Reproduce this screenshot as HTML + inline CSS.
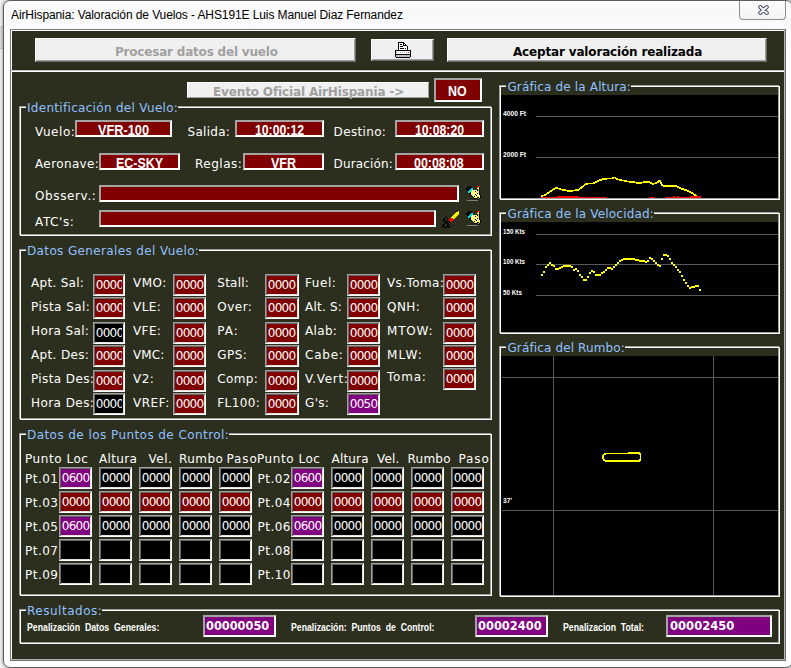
<!DOCTYPE html>
<html lang="es">
<head>
<meta charset="utf-8">
<title>AirHispania: Valoración de Vuelos</title>
<style>
html,body{margin:0;padding:0;}
body{width:791px;height:668px;overflow:hidden;background:#f3f3f3;position:relative;font-family:"Liberation Sans",sans-serif;}
#win{position:absolute;left:3px;top:0;width:788px;height:666px;border:1px solid #5c5c5c;border-radius:7px;background:linear-gradient(180deg,#ffffff 0,#f8f8f8 12px,#fbfbfb 28px,#ffffff 60px);box-shadow:inset 0 0 0 1px #fff,0 0 3px 1px rgba(0,0,0,.28);}
#cl{position:absolute;left:10px;top:29px;width:774px;height:630px;border:1px solid;border-color:#7b7b7b #707070 #707070 #7b7b7b;}
#app div,#app span.t{position:absolute;}
.t{white-space:pre;line-height:normal;transform-origin:0 50%;}
.clip{overflow:hidden;}
.btn{background:#f0f0f0;box-sizing:border-box;border:1px solid;border-color:#fff #696969 #696969 #fff;box-shadow:inset -1px -1px 0 #a0a0a0;}
.btn2{background:#f0f0f0;box-sizing:border-box;border:1px solid;border-color:#fff #a0a0a0 #a0a0a0 #fff;}
.f1{box-sizing:border-box;border:2px solid;border-color:#a4a4a4 #fff #fff #a4a4a4;}
.f2{box-sizing:border-box;border:1px solid;border-color:#a0a0a0 #fff #fff #a0a0a0;box-shadow:inset 1px 1px 0 #696969,inset -1px -1px 0 #e3e3e3;}
.gb{border:1px solid #a0a0a0;}
.gw{border:1px solid #fff;}
#close{position:absolute;left:739px;top:1px;width:45px;height:18px;border:1px solid #8e8e8e;border-top:none;border-radius:0 0 4px 4px;background:linear-gradient(180deg,#fdfdfd,#f3f3f3);}
svg{position:absolute;left:0;top:0;}
</style>
</head>
<body>
<div style="position:absolute;left:0;top:26px;width:4px;height:21px;background:#dcdcdc;border-top:1px solid #cfcfcf;border-bottom:1px solid #cfcfcf"></div>
<div id="win"></div>
<div id="close"></div>
<div id="cl"></div>
<div id="app">
<div style="left:11px;top:30px;width:773px;height:629px;background:#2d2f1e"></div>
<div style="left:11px;top:30px;width:774px;height:1px;background:#fff"></div>
<div style="left:11px;top:30px;width:1px;height:41px;background:#fff"></div>
<div style="left:11px;top:70px;width:774px;height:1px;background:#c4c4c4"></div>
<div style="left:11px;top:71px;width:774px;height:1px;background:#fff"></div>
<div style="left:11px;top:71px;width:1px;height:588px;background:#fff"></div>
<div style="left:784px;top:30px;width:1px;height:630px;background:#b4b4b4"></div>
<div style="left:11px;top:659px;width:774px;height:1px;background:#b4b4b4"></div>
<div class="btn" style="left:35px;top:38px;width:321px;height:24px"></div>
<div class="btn" style="left:371px;top:39px;width:63px;height:22px"></div>
<div class="btn" style="left:447px;top:38px;width:320px;height:24px"></div>
<div class="btn2" style="left:187px;top:82px;width:242px;height:16px"></div>
<div class="f1" style="left:434px;top:78px;width:48px;height:24px;background:#800000"></div>
<div class="gb" style="left:19px;top:106px;width:470px;height:127px"></div>
<div class="gw" style="left:20px;top:107px;width:470px;height:127px"></div>
<div style="left:26px;top:105px;width:152px;height:4px;background:#2d2f1e"></div>
<div class="gb" style="left:19px;top:249px;width:470px;height:168px"></div>
<div class="gw" style="left:20px;top:250px;width:470px;height:168px"></div>
<div style="left:26px;top:248px;width:173px;height:4px;background:#2d2f1e"></div>
<div class="gb" style="left:19px;top:433px;width:470px;height:160px"></div>
<div class="gw" style="left:20px;top:434px;width:470px;height:160px"></div>
<div style="left:26px;top:432px;width:203px;height:4px;background:#2d2f1e"></div>
<div class="gb" style="left:19px;top:609px;width:758px;height:32px"></div>
<div class="gw" style="left:20px;top:610px;width:758px;height:32px"></div>
<div style="left:26px;top:608px;width:76px;height:4px;background:#2d2f1e"></div>
<div class="gb" style="left:499px;top:85px;width:278px;height:112px"></div>
<div class="gw" style="left:500px;top:86px;width:278px;height:112px"></div>
<div style="left:506.4px;top:84px;width:124.60000000000002px;height:4px;background:#2d2f1e"></div>
<div class="gb" style="left:499px;top:212px;width:278px;height:119px"></div>
<div class="gw" style="left:500px;top:213px;width:278px;height:119px"></div>
<div style="left:506.4px;top:211px;width:147.60000000000002px;height:4px;background:#2d2f1e"></div>
<div class="gb" style="left:499px;top:346px;width:278px;height:248px"></div>
<div class="gw" style="left:500px;top:347px;width:278px;height:248px"></div>
<div style="left:506.4px;top:345px;width:118.60000000000002px;height:4px;background:#2d2f1e"></div>
<div class="f1" style="left:75px;top:120px;width:97px;height:17px;background:#800000"></div>
<div class="f1" style="left:235px;top:120px;width:89px;height:17px;background:#800000"></div>
<div class="f1" style="left:395px;top:120px;width:89px;height:17px;background:#800000"></div>
<div class="f1" style="left:99px;top:153px;width:81px;height:17px;background:#800000"></div>
<div class="f1" style="left:243px;top:153px;width:81px;height:17px;background:#800000"></div>
<div class="f1" style="left:395px;top:153px;width:89px;height:17px;background:#800000"></div>
<div class="f1" style="left:99px;top:185px;width:360px;height:17px;background:#800000"></div>
<div class="f1" style="left:99px;top:210px;width:337px;height:17px;background:#800000"></div>
<div class="f2" style="left:93px;top:274px;width:32px;height:22px;background:#800000"></div>
<div class="f2" style="left:93px;top:297px;width:32px;height:22px;background:#800000"></div>
<div class="f2" style="left:93px;top:322px;width:32px;height:22px;background:#000"></div>
<div class="f2" style="left:93px;top:345px;width:32px;height:22px;background:#800000"></div>
<div class="f2" style="left:93px;top:370px;width:32px;height:22px;background:#800000"></div>
<div class="f2" style="left:93px;top:393px;width:32px;height:22px;background:#000"></div>
<div class="f2" style="left:173px;top:274px;width:33px;height:22px;background:#800000"></div>
<div class="f2" style="left:173px;top:297px;width:33px;height:22px;background:#800000"></div>
<div class="f2" style="left:173px;top:322px;width:33px;height:22px;background:#800000"></div>
<div class="f2" style="left:173px;top:345px;width:33px;height:22px;background:#800000"></div>
<div class="f2" style="left:173px;top:370px;width:33px;height:22px;background:#800000"></div>
<div class="f2" style="left:173px;top:393px;width:33px;height:22px;background:#800000"></div>
<div class="f2" style="left:265px;top:274px;width:34px;height:22px;background:#800000"></div>
<div class="f2" style="left:265px;top:297px;width:34px;height:22px;background:#800000"></div>
<div class="f2" style="left:265px;top:322px;width:34px;height:22px;background:#800000"></div>
<div class="f2" style="left:265px;top:345px;width:34px;height:22px;background:#800000"></div>
<div class="f2" style="left:265px;top:370px;width:34px;height:22px;background:#800000"></div>
<div class="f2" style="left:265px;top:393px;width:34px;height:22px;background:#800000"></div>
<div class="f2" style="left:347px;top:274px;width:33px;height:22px;background:#800000"></div>
<div class="f2" style="left:347px;top:297px;width:33px;height:22px;background:#800000"></div>
<div class="f2" style="left:347px;top:322px;width:33px;height:22px;background:#800000"></div>
<div class="f2" style="left:347px;top:345px;width:33px;height:22px;background:#800000"></div>
<div class="f2" style="left:347px;top:370px;width:33px;height:22px;background:#800000"></div>
<div class="f2" style="left:347px;top:393px;width:33px;height:22px;background:#800080"></div>
<div class="f2" style="left:443px;top:274px;width:33px;height:22px;background:#800000"></div>
<div class="f2" style="left:443px;top:297px;width:33px;height:22px;background:#800000"></div>
<div class="f2" style="left:443px;top:322px;width:33px;height:22px;background:#800000"></div>
<div class="f2" style="left:443px;top:345px;width:33px;height:22px;background:#800000"></div>
<div class="f2" style="left:443px;top:368px;width:33px;height:22px;background:#800000"></div>
<div class="f2" style="left:59px;top:467px;width:33px;height:22px;background:#800080"></div>
<div class="f2" style="left:99px;top:467px;width:33px;height:22px;background:#000"></div>
<div class="f2" style="left:139px;top:467px;width:33px;height:22px;background:#000"></div>
<div class="f2" style="left:179px;top:467px;width:33px;height:22px;background:#000"></div>
<div class="f2" style="left:219px;top:467px;width:33px;height:22px;background:#000"></div>
<div class="f2" style="left:291px;top:467px;width:33px;height:22px;background:#800080"></div>
<div class="f2" style="left:331px;top:467px;width:33px;height:22px;background:#000"></div>
<div class="f2" style="left:371px;top:467px;width:33px;height:22px;background:#000"></div>
<div class="f2" style="left:411px;top:467px;width:33px;height:22px;background:#000"></div>
<div class="f2" style="left:451px;top:467px;width:33px;height:22px;background:#000"></div>
<div class="f2" style="left:59px;top:491px;width:33px;height:22px;background:#800000"></div>
<div class="f2" style="left:99px;top:491px;width:33px;height:22px;background:#800000"></div>
<div class="f2" style="left:139px;top:491px;width:33px;height:22px;background:#800000"></div>
<div class="f2" style="left:179px;top:491px;width:33px;height:22px;background:#800000"></div>
<div class="f2" style="left:219px;top:491px;width:33px;height:22px;background:#800000"></div>
<div class="f2" style="left:291px;top:491px;width:33px;height:22px;background:#800000"></div>
<div class="f2" style="left:331px;top:491px;width:33px;height:22px;background:#800000"></div>
<div class="f2" style="left:371px;top:491px;width:33px;height:22px;background:#800000"></div>
<div class="f2" style="left:411px;top:491px;width:33px;height:22px;background:#800000"></div>
<div class="f2" style="left:451px;top:491px;width:33px;height:22px;background:#800000"></div>
<div class="f2" style="left:59px;top:515px;width:33px;height:22px;background:#800080"></div>
<div class="f2" style="left:99px;top:515px;width:33px;height:22px;background:#000"></div>
<div class="f2" style="left:139px;top:515px;width:33px;height:22px;background:#000"></div>
<div class="f2" style="left:179px;top:515px;width:33px;height:22px;background:#000"></div>
<div class="f2" style="left:219px;top:515px;width:33px;height:22px;background:#000"></div>
<div class="f2" style="left:291px;top:515px;width:33px;height:22px;background:#800080"></div>
<div class="f2" style="left:331px;top:515px;width:33px;height:22px;background:#000"></div>
<div class="f2" style="left:371px;top:515px;width:33px;height:22px;background:#000"></div>
<div class="f2" style="left:411px;top:515px;width:33px;height:22px;background:#000"></div>
<div class="f2" style="left:451px;top:515px;width:33px;height:22px;background:#000"></div>
<div class="f2" style="left:59px;top:539px;width:33px;height:22px;background:#000"></div>
<div class="f2" style="left:99px;top:539px;width:33px;height:22px;background:#000"></div>
<div class="f2" style="left:139px;top:539px;width:33px;height:22px;background:#000"></div>
<div class="f2" style="left:179px;top:539px;width:33px;height:22px;background:#000"></div>
<div class="f2" style="left:219px;top:539px;width:33px;height:22px;background:#000"></div>
<div class="f2" style="left:291px;top:539px;width:33px;height:22px;background:#000"></div>
<div class="f2" style="left:331px;top:539px;width:33px;height:22px;background:#000"></div>
<div class="f2" style="left:371px;top:539px;width:33px;height:22px;background:#000"></div>
<div class="f2" style="left:411px;top:539px;width:33px;height:22px;background:#000"></div>
<div class="f2" style="left:451px;top:539px;width:33px;height:22px;background:#000"></div>
<div class="f2" style="left:59px;top:563px;width:33px;height:22px;background:#000"></div>
<div class="f2" style="left:99px;top:563px;width:33px;height:22px;background:#000"></div>
<div class="f2" style="left:139px;top:563px;width:33px;height:22px;background:#000"></div>
<div class="f2" style="left:179px;top:563px;width:33px;height:22px;background:#000"></div>
<div class="f2" style="left:219px;top:563px;width:33px;height:22px;background:#000"></div>
<div class="f2" style="left:291px;top:563px;width:33px;height:22px;background:#000"></div>
<div class="f2" style="left:331px;top:563px;width:33px;height:22px;background:#000"></div>
<div class="f2" style="left:371px;top:563px;width:33px;height:22px;background:#000"></div>
<div class="f2" style="left:411px;top:563px;width:33px;height:22px;background:#000"></div>
<div class="f2" style="left:451px;top:563px;width:33px;height:22px;background:#000"></div>
<div class="f1" style="left:203px;top:615px;width:73px;height:22px;background:#800080"></div>
<div class="f1" style="left:475px;top:615px;width:73px;height:22px;background:#800080"></div>
<div class="f1" style="left:666px;top:615px;width:106px;height:22px;background:#800080"></div>
<div style="left:501px;top:95px;width:277px;height:103px;background:#000"></div>
<div style="left:501px;top:222px;width:277px;height:110px;background:#000"></div>
<div style="left:501px;top:356px;width:277px;height:239px;background:#000"></div>
<div style="left:536px;top:116px;width:242px;height:1px;background:#5a5a5a"></div>
<div style="left:536px;top:157px;width:242px;height:1px;background:#5a5a5a"></div>
<div style="left:536px;top:234px;width:242px;height:1px;background:#5a5a5a"></div>
<div style="left:536px;top:264px;width:242px;height:1px;background:#5a5a5a"></div>
<div style="left:536px;top:295px;width:242px;height:1px;background:#5a5a5a"></div>
<div style="left:553px;top:356px;width:1px;height:239px;background:#5a5a5a"></div>
<div style="left:713px;top:356px;width:1px;height:239px;background:#5a5a5a"></div>
<div style="left:502px;top:377px;width:276px;height:1px;background:#5a5a5a"></div>
<div style="left:502px;top:510px;width:276px;height:1px;background:#5a5a5a"></div>
<span class="t" style="left:11.00px;top:8.00px;font:12px 'Liberation Sans', sans-serif;color:#000;letter-spacing:-0.101px;">AirHispania: Valoración de Vuelos - AHS191E Luis Manuel Diaz Fernandez</span>
<span class="t" style="left:115.00px;top:45.00px;font:bold 12px 'DejaVu Sans', sans-serif;color:#a0a0a0;letter-spacing:-0.197px;">Procesar datos del vuelo</span>
<span class="t" style="left:513.00px;top:45.00px;font:bold 12px 'DejaVu Sans', sans-serif;color:#000;letter-spacing:-0.163px;">Aceptar valoración realizada</span>
<span class="t" style="left:213.00px;top:85.00px;font:bold 12px 'DejaVu Sans', sans-serif;color:#a0a0a0;letter-spacing:-0.141px;">Evento Oficial AirHispania -&gt;</span>
<span class="t" style="left:448.40px;top:82.00px;font:bold 15px 'Liberation Sans', sans-serif;color:#fff;transform:scaleX(0.8267);">NO</span>
<span class="t" style="left:27.00px;top:101.00px;font:12px 'DejaVu Sans', sans-serif;color:#90c0ff;letter-spacing:0.302px;">Identificación del Vuelo:</span>
<span class="t" style="left:27.00px;top:244.00px;font:12px 'DejaVu Sans', sans-serif;color:#90c0ff;letter-spacing:0.368px;">Datos Generales del Vuelo:</span>
<span class="t" style="left:27.00px;top:428.00px;font:12px 'DejaVu Sans', sans-serif;color:#90c0ff;letter-spacing:0.435px;">Datos de los Puntos de Control:</span>
<span class="t" style="left:27.00px;top:604.00px;font:12px 'DejaVu Sans', sans-serif;color:#90c0ff;letter-spacing:0.521px;">Resultados:</span>
<span class="t" style="left:507.40px;top:80.00px;font:12px 'DejaVu Sans', sans-serif;color:#90c0ff;letter-spacing:0.154px;">Gráfica de la Altura:</span>
<span class="t" style="left:507.40px;top:207.00px;font:12px 'DejaVu Sans', sans-serif;color:#90c0ff;letter-spacing:0.190px;">Gráfica de la Velocidad:</span>
<span class="t" style="left:507.40px;top:341.00px;font:12px 'DejaVu Sans', sans-serif;color:#90c0ff;letter-spacing:0.138px;">Gráfica del Rumbo:</span>
<span class="t" style="left:35.00px;top:125.00px;font:12px 'DejaVu Sans', sans-serif;color:#fff;letter-spacing:0.558px;">Vuelo:</span>
<span class="t" style="left:98.00px;top:121.00px;font:bold 15px 'Liberation Sans', sans-serif;color:#fff;transform:scaleX(0.8496);">VFR-100</span>
<span class="t" style="left:187.60px;top:125.00px;font:12px 'DejaVu Sans', sans-serif;color:#fff;letter-spacing:0.274px;">Salida:</span>
<span class="t" style="left:255.00px;top:121.00px;font:bold 15px 'Liberation Sans', sans-serif;color:#fff;transform:scaleX(0.8160);">10:00:12</span>
<span class="t" style="left:333.60px;top:125.00px;font:12px 'DejaVu Sans', sans-serif;color:#fff;letter-spacing:0.342px;">Destino:</span>
<span class="t" style="left:415.00px;top:121.00px;font:bold 15px 'Liberation Sans', sans-serif;color:#fff;transform:scaleX(0.8160);">10:08:20</span>
<span class="t" style="left:35.00px;top:157.00px;font:12px 'DejaVu Sans', sans-serif;color:#fff;letter-spacing:0.376px;">Aeronave:</span>
<span class="t" style="left:116.00px;top:154.00px;font:bold 15px 'Liberation Sans', sans-serif;color:#fff;transform:scaleX(0.8291);">EC-SKY</span>
<span class="t" style="left:195.00px;top:157.00px;font:12px 'DejaVu Sans', sans-serif;color:#fff;letter-spacing:0.520px;">Reglas:</span>
<span class="t" style="left:271.00px;top:154.00px;font:bold 15px 'Liberation Sans', sans-serif;color:#fff;transform:scaleX(0.8333);">VFR</span>
<span class="t" style="left:333.60px;top:157.00px;font:12px 'DejaVu Sans', sans-serif;color:#fff;letter-spacing:0.155px;">Duración:</span>
<span class="t" style="left:414.40px;top:154.00px;font:bold 15px 'Liberation Sans', sans-serif;color:#fff;transform:scaleX(0.8260);">00:08:08</span>
<span class="t" style="left:35.00px;top:189.00px;font:12px 'DejaVu Sans', sans-serif;color:#fff;letter-spacing:0.622px;">Obsserv.:</span>
<span class="t" style="left:35.00px;top:215.00px;font:12px 'DejaVu Sans', sans-serif;color:#fff;letter-spacing:0.602px;">ATC&#x27;s:</span>
<span class="t" style="left:31.00px;top:276.00px;font:12px 'DejaVu Sans', sans-serif;color:#fff;letter-spacing:0.298px;">Apt. Sal:</span>
<div class="clip" style="left:95.0px;top:278.00px;width:27.0px;height:14px"><span class="t" style="left:0.80px;top:0;font:12px 'DejaVu Sans', sans-serif;color:#fff;letter-spacing:-0.75px">0000</span></div>
<span class="t" style="left:31.00px;top:300.00px;font:12px 'DejaVu Sans', sans-serif;color:#fff;letter-spacing:0.458px;">Pista Sal:</span>
<div class="clip" style="left:95.0px;top:301.00px;width:27.0px;height:14px"><span class="t" style="left:0.80px;top:0;font:12px 'DejaVu Sans', sans-serif;color:#fff;letter-spacing:-0.75px">0000</span></div>
<span class="t" style="left:31.00px;top:324.00px;font:12px 'DejaVu Sans', sans-serif;color:#fff;letter-spacing:0.384px;">Hora Sal:</span>
<div class="clip" style="left:95.0px;top:326.00px;width:27.0px;height:14px"><span class="t" style="left:0.80px;top:0;font:12px 'DejaVu Sans', sans-serif;color:#fff;letter-spacing:-0.75px">0000</span></div>
<span class="t" style="left:31.00px;top:348.00px;font:12px 'DejaVu Sans', sans-serif;color:#fff;letter-spacing:0.353px;">Apt. Des:</span>
<div class="clip" style="left:95.0px;top:349.00px;width:27.0px;height:14px"><span class="t" style="left:0.80px;top:0;font:12px 'DejaVu Sans', sans-serif;color:#fff;letter-spacing:-0.75px">0000</span></div>
<span class="t" style="left:31.00px;top:372.00px;font:12px 'DejaVu Sans', sans-serif;color:#fff;letter-spacing:0.393px;">Pista Des:</span>
<div class="clip" style="left:95.0px;top:374.00px;width:27.0px;height:14px"><span class="t" style="left:0.80px;top:0;font:12px 'DejaVu Sans', sans-serif;color:#fff;letter-spacing:-0.75px">0000</span></div>
<span class="t" style="left:31.00px;top:396.00px;font:12px 'DejaVu Sans', sans-serif;color:#fff;letter-spacing:0.439px;">Hora Des:</span>
<div class="clip" style="left:95.0px;top:397.00px;width:27.0px;height:14px"><span class="t" style="left:0.80px;top:0;font:12px 'DejaVu Sans', sans-serif;color:#fff;letter-spacing:-0.75px">0000</span></div>
<span class="t" style="left:133.00px;top:276.00px;font:12px 'DejaVu Sans', sans-serif;color:#fff;letter-spacing:0.485px;">VMO:</span>
<div class="clip" style="left:175.0px;top:278.00px;width:29.0px;height:14px"><span class="t" style="left:0.80px;top:0;font:12px 'DejaVu Sans', sans-serif;color:#fff;letter-spacing:-0.75px">0000</span></div>
<span class="t" style="left:133.00px;top:300.00px;font:12px 'DejaVu Sans', sans-serif;color:#fff;letter-spacing:0.456px;">VLE:</span>
<div class="clip" style="left:175.0px;top:301.00px;width:29.0px;height:14px"><span class="t" style="left:0.80px;top:0;font:12px 'DejaVu Sans', sans-serif;color:#fff;letter-spacing:-0.75px">0000</span></div>
<span class="t" style="left:133.00px;top:324.00px;font:12px 'DejaVu Sans', sans-serif;color:#fff;letter-spacing:0.383px;">VFE:</span>
<div class="clip" style="left:175.0px;top:326.00px;width:29.0px;height:14px"><span class="t" style="left:0.80px;top:0;font:12px 'DejaVu Sans', sans-serif;color:#fff;letter-spacing:-0.75px">0000</span></div>
<span class="t" style="left:133.00px;top:348.00px;font:12px 'DejaVu Sans', sans-serif;color:#fff;letter-spacing:0.105px;">VMC:</span>
<div class="clip" style="left:175.0px;top:349.00px;width:29.0px;height:14px"><span class="t" style="left:0.80px;top:0;font:12px 'DejaVu Sans', sans-serif;color:#fff;letter-spacing:-0.75px">0000</span></div>
<span class="t" style="left:133.00px;top:372.00px;font:12px 'DejaVu Sans', sans-serif;color:#fff;letter-spacing:0.505px;">V2:</span>
<div class="clip" style="left:175.0px;top:374.00px;width:29.0px;height:14px"><span class="t" style="left:0.80px;top:0;font:12px 'DejaVu Sans', sans-serif;color:#fff;letter-spacing:-0.75px">0000</span></div>
<span class="t" style="left:133.00px;top:396.00px;font:12px 'DejaVu Sans', sans-serif;color:#fff;letter-spacing:0.511px;">VREF:</span>
<div class="clip" style="left:175.0px;top:397.00px;width:29.0px;height:14px"><span class="t" style="left:0.80px;top:0;font:12px 'DejaVu Sans', sans-serif;color:#fff;letter-spacing:-0.75px">0000</span></div>
<span class="t" style="left:217.30px;top:276.00px;font:12px 'DejaVu Sans', sans-serif;color:#fff;letter-spacing:0.242px;">Stall:</span>
<div class="clip" style="left:267.0px;top:278.00px;width:30.0px;height:14px"><span class="t" style="left:0.80px;top:0;font:12px 'DejaVu Sans', sans-serif;color:#fff;letter-spacing:-0.75px">0000</span></div>
<span class="t" style="left:217.30px;top:300.00px;font:12px 'DejaVu Sans', sans-serif;color:#fff;letter-spacing:0.474px;">Over:</span>
<div class="clip" style="left:267.0px;top:301.00px;width:30.0px;height:14px"><span class="t" style="left:0.80px;top:0;font:12px 'DejaVu Sans', sans-serif;color:#fff;letter-spacing:-0.75px">0000</span></div>
<span class="t" style="left:217.30px;top:324.00px;font:12px 'DejaVu Sans', sans-serif;color:#fff;letter-spacing:1.042px;">PA:</span>
<div class="clip" style="left:267.0px;top:326.00px;width:30.0px;height:14px"><span class="t" style="left:0.80px;top:0;font:12px 'DejaVu Sans', sans-serif;color:#fff;letter-spacing:-0.75px">0000</span></div>
<span class="t" style="left:217.30px;top:348.00px;font:12px 'DejaVu Sans', sans-serif;color:#fff;letter-spacing:0.466px;">GPS:</span>
<div class="clip" style="left:267.0px;top:349.00px;width:30.0px;height:14px"><span class="t" style="left:0.80px;top:0;font:12px 'DejaVu Sans', sans-serif;color:#fff;letter-spacing:-0.75px">0000</span></div>
<span class="t" style="left:217.30px;top:372.00px;font:12px 'DejaVu Sans', sans-serif;color:#fff;letter-spacing:0.380px;">Comp:</span>
<div class="clip" style="left:267.0px;top:374.00px;width:30.0px;height:14px"><span class="t" style="left:0.80px;top:0;font:12px 'DejaVu Sans', sans-serif;color:#fff;letter-spacing:-0.75px">0000</span></div>
<span class="t" style="left:217.30px;top:396.00px;font:12px 'DejaVu Sans', sans-serif;color:#fff;letter-spacing:0.411px;">FL100:</span>
<div class="clip" style="left:267.0px;top:397.00px;width:30.0px;height:14px"><span class="t" style="left:0.80px;top:0;font:12px 'DejaVu Sans', sans-serif;color:#fff;letter-spacing:-0.75px">0000</span></div>
<span class="t" style="left:305.00px;top:276.00px;font:12px 'DejaVu Sans', sans-serif;color:#fff;letter-spacing:0.569px;">Fuel:</span>
<div class="clip" style="left:349.0px;top:278.00px;width:29.0px;height:14px"><span class="t" style="left:0.80px;top:0;font:12px 'DejaVu Sans', sans-serif;color:#fff;letter-spacing:-0.75px">0000</span></div>
<span class="t" style="left:305.00px;top:300.00px;font:12px 'DejaVu Sans', sans-serif;color:#fff;letter-spacing:0.226px;">Alt. S:</span>
<div class="clip" style="left:349.0px;top:301.00px;width:29.0px;height:14px"><span class="t" style="left:0.80px;top:0;font:12px 'DejaVu Sans', sans-serif;color:#fff;letter-spacing:-0.75px">0000</span></div>
<span class="t" style="left:305.00px;top:324.00px;font:12px 'DejaVu Sans', sans-serif;color:#fff;letter-spacing:0.334px;">Alab:</span>
<div class="clip" style="left:349.0px;top:326.00px;width:29.0px;height:14px"><span class="t" style="left:0.80px;top:0;font:12px 'DejaVu Sans', sans-serif;color:#fff;letter-spacing:-0.75px">0000</span></div>
<span class="t" style="left:305.00px;top:348.00px;font:12px 'DejaVu Sans', sans-serif;color:#fff;letter-spacing:0.780px;">Cabe:</span>
<div class="clip" style="left:349.0px;top:349.00px;width:29.0px;height:14px"><span class="t" style="left:0.80px;top:0;font:12px 'DejaVu Sans', sans-serif;color:#fff;letter-spacing:-0.75px">0000</span></div>
<span class="t" style="left:305.00px;top:372.00px;font:12px 'DejaVu Sans', sans-serif;color:#fff;letter-spacing:0.679px;">V.Vert:</span>
<div class="clip" style="left:349.0px;top:374.00px;width:29.0px;height:14px"><span class="t" style="left:0.80px;top:0;font:12px 'DejaVu Sans', sans-serif;color:#fff;letter-spacing:-0.75px">0000</span></div>
<span class="t" style="left:305.00px;top:396.00px;font:12px 'DejaVu Sans', sans-serif;color:#fff;letter-spacing:0.331px;">G&#x27;s:</span>
<div class="clip" style="left:349.0px;top:397.00px;width:29.0px;height:14px"><span class="t" style="left:0.80px;top:0;font:12px 'DejaVu Sans', sans-serif;color:#fff;letter-spacing:-0.75px">0050</span></div>
<span class="t" style="left:387.00px;top:276.00px;font:12px 'DejaVu Sans', sans-serif;color:#fff;letter-spacing:0.414px;">Vs.Toma:</span>
<div class="clip" style="left:445.0px;top:278.00px;width:29.0px;height:14px"><span class="t" style="left:0.80px;top:0;font:12px 'DejaVu Sans', sans-serif;color:#fff;letter-spacing:-0.75px">0000</span></div>
<span class="t" style="left:387.00px;top:300.00px;font:12px 'DejaVu Sans', sans-serif;color:#fff;letter-spacing:0.467px;">QNH:</span>
<div class="clip" style="left:445.0px;top:301.00px;width:29.0px;height:14px"><span class="t" style="left:0.80px;top:0;font:12px 'DejaVu Sans', sans-serif;color:#fff;letter-spacing:-0.75px">0000</span></div>
<span class="t" style="left:387.00px;top:324.00px;font:12px 'DejaVu Sans', sans-serif;color:#fff;letter-spacing:0.789px;">MTOW:</span>
<div class="clip" style="left:445.0px;top:326.00px;width:29.0px;height:14px"><span class="t" style="left:0.80px;top:0;font:12px 'DejaVu Sans', sans-serif;color:#fff;letter-spacing:-0.75px">0000</span></div>
<span class="t" style="left:387.00px;top:348.00px;font:12px 'DejaVu Sans', sans-serif;color:#fff;letter-spacing:1.248px;">MLW:</span>
<div class="clip" style="left:445.0px;top:349.00px;width:29.0px;height:14px"><span class="t" style="left:0.80px;top:0;font:12px 'DejaVu Sans', sans-serif;color:#fff;letter-spacing:-0.75px">0000</span></div>
<span class="t" style="left:387.00px;top:370.00px;font:12px 'DejaVu Sans', sans-serif;color:#fff;letter-spacing:0.795px;">Toma:</span>
<div class="clip" style="left:445.0px;top:372.00px;width:29.0px;height:14px"><span class="t" style="left:0.80px;top:0;font:12px 'DejaVu Sans', sans-serif;color:#fff;letter-spacing:-0.75px">0000</span></div>
<span class="t" style="left:25.00px;top:452.00px;font:12px 'DejaVu Sans', sans-serif;color:#fff;letter-spacing:0.548px;">Punto Loc</span>
<span class="t" style="left:99.00px;top:452.00px;font:12px 'DejaVu Sans', sans-serif;color:#fff;letter-spacing:0.352px;">Altura</span>
<span class="t" style="left:148.60px;top:452.00px;font:12px 'DejaVu Sans', sans-serif;color:#fff;letter-spacing:0.496px;">Vel.</span>
<span class="t" style="left:179.00px;top:452.00px;font:12px 'DejaVu Sans', sans-serif;color:#fff;letter-spacing:0.459px;">Rumbo</span>
<span class="t" style="left:226.40px;top:452.00px;font:12px 'DejaVu Sans', sans-serif;color:#fff;letter-spacing:0.948px;">Paso</span>
<span class="t" style="left:257.00px;top:452.00px;font:12px 'DejaVu Sans', sans-serif;color:#fff;letter-spacing:0.548px;">Punto Loc</span>
<span class="t" style="left:331.60px;top:452.00px;font:12px 'DejaVu Sans', sans-serif;color:#fff;letter-spacing:0.152px;">Altura</span>
<span class="t" style="left:377.00px;top:452.00px;font:12px 'DejaVu Sans', sans-serif;color:#fff;letter-spacing:0.162px;">Vel.</span>
<span class="t" style="left:407.60px;top:452.00px;font:12px 'DejaVu Sans', sans-serif;color:#fff;letter-spacing:0.209px;">Rumbo</span>
<span class="t" style="left:458.40px;top:452.00px;font:12px 'DejaVu Sans', sans-serif;color:#fff;letter-spacing:0.948px;">Paso</span>
<span class="t" style="left:25.00px;top:472.00px;font:12px 'DejaVu Sans', sans-serif;color:#fff;letter-spacing:0.467px;">Pt.01</span>
<span class="t" style="left:257.60px;top:472.00px;font:12px 'DejaVu Sans', sans-serif;color:#fff;letter-spacing:0.467px;">Pt.02</span>
<div class="clip" style="left:61.0px;top:471.00px;width:29.0px;height:14px"><span class="t" style="left:0.80px;top:0;font:12px 'DejaVu Sans', sans-serif;color:#fff;letter-spacing:-0.75px">0600</span></div>
<div class="clip" style="left:101.0px;top:471.00px;width:29.0px;height:14px"><span class="t" style="left:0.80px;top:0;font:12px 'DejaVu Sans', sans-serif;color:#fff;letter-spacing:-0.75px">0000</span></div>
<div class="clip" style="left:141.0px;top:471.00px;width:29.0px;height:14px"><span class="t" style="left:0.80px;top:0;font:12px 'DejaVu Sans', sans-serif;color:#fff;letter-spacing:-0.75px">0000</span></div>
<div class="clip" style="left:181.0px;top:471.00px;width:29.0px;height:14px"><span class="t" style="left:0.80px;top:0;font:12px 'DejaVu Sans', sans-serif;color:#fff;letter-spacing:-0.75px">0000</span></div>
<div class="clip" style="left:221.0px;top:471.00px;width:29.0px;height:14px"><span class="t" style="left:0.80px;top:0;font:12px 'DejaVu Sans', sans-serif;color:#fff;letter-spacing:-0.75px">0000</span></div>
<div class="clip" style="left:293.0px;top:471.00px;width:29.0px;height:14px"><span class="t" style="left:0.80px;top:0;font:12px 'DejaVu Sans', sans-serif;color:#fff;letter-spacing:-0.75px">0600</span></div>
<div class="clip" style="left:333.0px;top:471.00px;width:29.0px;height:14px"><span class="t" style="left:0.80px;top:0;font:12px 'DejaVu Sans', sans-serif;color:#fff;letter-spacing:-0.75px">0000</span></div>
<div class="clip" style="left:373.0px;top:471.00px;width:29.0px;height:14px"><span class="t" style="left:0.80px;top:0;font:12px 'DejaVu Sans', sans-serif;color:#fff;letter-spacing:-0.75px">0000</span></div>
<div class="clip" style="left:413.0px;top:471.00px;width:29.0px;height:14px"><span class="t" style="left:0.80px;top:0;font:12px 'DejaVu Sans', sans-serif;color:#fff;letter-spacing:-0.75px">0000</span></div>
<div class="clip" style="left:453.0px;top:471.00px;width:29.0px;height:14px"><span class="t" style="left:0.80px;top:0;font:12px 'DejaVu Sans', sans-serif;color:#fff;letter-spacing:-0.75px">0000</span></div>
<span class="t" style="left:25.00px;top:496.00px;font:12px 'DejaVu Sans', sans-serif;color:#fff;letter-spacing:0.467px;">Pt.03</span>
<span class="t" style="left:257.60px;top:496.00px;font:12px 'DejaVu Sans', sans-serif;color:#fff;letter-spacing:0.467px;">Pt.04</span>
<div class="clip" style="left:61.0px;top:495.00px;width:29.0px;height:14px"><span class="t" style="left:0.80px;top:0;font:12px 'DejaVu Sans', sans-serif;color:#fff;letter-spacing:-0.75px">0000</span></div>
<div class="clip" style="left:101.0px;top:495.00px;width:29.0px;height:14px"><span class="t" style="left:0.80px;top:0;font:12px 'DejaVu Sans', sans-serif;color:#fff;letter-spacing:-0.75px">0000</span></div>
<div class="clip" style="left:141.0px;top:495.00px;width:29.0px;height:14px"><span class="t" style="left:0.80px;top:0;font:12px 'DejaVu Sans', sans-serif;color:#fff;letter-spacing:-0.75px">0000</span></div>
<div class="clip" style="left:181.0px;top:495.00px;width:29.0px;height:14px"><span class="t" style="left:0.80px;top:0;font:12px 'DejaVu Sans', sans-serif;color:#fff;letter-spacing:-0.75px">0000</span></div>
<div class="clip" style="left:221.0px;top:495.00px;width:29.0px;height:14px"><span class="t" style="left:0.80px;top:0;font:12px 'DejaVu Sans', sans-serif;color:#fff;letter-spacing:-0.75px">0000</span></div>
<div class="clip" style="left:293.0px;top:495.00px;width:29.0px;height:14px"><span class="t" style="left:0.80px;top:0;font:12px 'DejaVu Sans', sans-serif;color:#fff;letter-spacing:-0.75px">0000</span></div>
<div class="clip" style="left:333.0px;top:495.00px;width:29.0px;height:14px"><span class="t" style="left:0.80px;top:0;font:12px 'DejaVu Sans', sans-serif;color:#fff;letter-spacing:-0.75px">0000</span></div>
<div class="clip" style="left:373.0px;top:495.00px;width:29.0px;height:14px"><span class="t" style="left:0.80px;top:0;font:12px 'DejaVu Sans', sans-serif;color:#fff;letter-spacing:-0.75px">0000</span></div>
<div class="clip" style="left:413.0px;top:495.00px;width:29.0px;height:14px"><span class="t" style="left:0.80px;top:0;font:12px 'DejaVu Sans', sans-serif;color:#fff;letter-spacing:-0.75px">0000</span></div>
<div class="clip" style="left:453.0px;top:495.00px;width:29.0px;height:14px"><span class="t" style="left:0.80px;top:0;font:12px 'DejaVu Sans', sans-serif;color:#fff;letter-spacing:-0.75px">0000</span></div>
<span class="t" style="left:25.00px;top:520.00px;font:12px 'DejaVu Sans', sans-serif;color:#fff;letter-spacing:0.467px;">Pt.05</span>
<span class="t" style="left:257.60px;top:520.00px;font:12px 'DejaVu Sans', sans-serif;color:#fff;letter-spacing:0.467px;">Pt.06</span>
<div class="clip" style="left:61.0px;top:519.00px;width:29.0px;height:14px"><span class="t" style="left:0.80px;top:0;font:12px 'DejaVu Sans', sans-serif;color:#fff;letter-spacing:-0.75px">0600</span></div>
<div class="clip" style="left:101.0px;top:519.00px;width:29.0px;height:14px"><span class="t" style="left:0.80px;top:0;font:12px 'DejaVu Sans', sans-serif;color:#fff;letter-spacing:-0.75px">0000</span></div>
<div class="clip" style="left:141.0px;top:519.00px;width:29.0px;height:14px"><span class="t" style="left:0.80px;top:0;font:12px 'DejaVu Sans', sans-serif;color:#fff;letter-spacing:-0.75px">0000</span></div>
<div class="clip" style="left:181.0px;top:519.00px;width:29.0px;height:14px"><span class="t" style="left:0.80px;top:0;font:12px 'DejaVu Sans', sans-serif;color:#fff;letter-spacing:-0.75px">0000</span></div>
<div class="clip" style="left:221.0px;top:519.00px;width:29.0px;height:14px"><span class="t" style="left:0.80px;top:0;font:12px 'DejaVu Sans', sans-serif;color:#fff;letter-spacing:-0.75px">0000</span></div>
<div class="clip" style="left:293.0px;top:519.00px;width:29.0px;height:14px"><span class="t" style="left:0.80px;top:0;font:12px 'DejaVu Sans', sans-serif;color:#fff;letter-spacing:-0.75px">0600</span></div>
<div class="clip" style="left:333.0px;top:519.00px;width:29.0px;height:14px"><span class="t" style="left:0.80px;top:0;font:12px 'DejaVu Sans', sans-serif;color:#fff;letter-spacing:-0.75px">0000</span></div>
<div class="clip" style="left:373.0px;top:519.00px;width:29.0px;height:14px"><span class="t" style="left:0.80px;top:0;font:12px 'DejaVu Sans', sans-serif;color:#fff;letter-spacing:-0.75px">0000</span></div>
<div class="clip" style="left:413.0px;top:519.00px;width:29.0px;height:14px"><span class="t" style="left:0.80px;top:0;font:12px 'DejaVu Sans', sans-serif;color:#fff;letter-spacing:-0.75px">0000</span></div>
<div class="clip" style="left:453.0px;top:519.00px;width:29.0px;height:14px"><span class="t" style="left:0.80px;top:0;font:12px 'DejaVu Sans', sans-serif;color:#fff;letter-spacing:-0.75px">0000</span></div>
<span class="t" style="left:25.00px;top:544.00px;font:12px 'DejaVu Sans', sans-serif;color:#fff;letter-spacing:0.467px;">Pt.07</span>
<span class="t" style="left:257.60px;top:544.00px;font:12px 'DejaVu Sans', sans-serif;color:#fff;letter-spacing:0.467px;">Pt.08</span>
<span class="t" style="left:25.00px;top:568.00px;font:12px 'DejaVu Sans', sans-serif;color:#fff;letter-spacing:0.467px;">Pt.09</span>
<span class="t" style="left:257.60px;top:568.00px;font:12px 'DejaVu Sans', sans-serif;color:#fff;letter-spacing:0.467px;">Pt.10</span>
<span class="t" style="left:27.00px;top:621.00px;font:bold 11px 'Liberation Sans', sans-serif;color:#fff;transform:scaleX(0.7962);word-spacing:3.0px;">Penalización Datos Generales:</span>
<span class="t" style="left:291.00px;top:621.00px;font:bold 11px 'Liberation Sans', sans-serif;color:#fff;transform:scaleX(0.7913);word-spacing:3.0px;">Penalización: Puntos de Control:</span>
<span class="t" style="left:563.00px;top:621.00px;font:bold 11px 'Liberation Sans', sans-serif;color:#fff;transform:scaleX(0.7956);word-spacing:3.0px;">Penalizacion Total:</span>
<span class="t" style="left:206.40px;top:619.00px;font:bold 12px 'DejaVu Sans', sans-serif;color:#fff;transform:scaleX(0.9462);">00000050</span>
<span class="t" style="left:478.40px;top:619.00px;font:bold 12px 'DejaVu Sans', sans-serif;color:#fff;transform:scaleX(0.9521);">00002400</span>
<span class="t" style="left:669.60px;top:619.00px;font:bold 12px 'DejaVu Sans', sans-serif;color:#fff;transform:scaleX(0.9641);">00002450</span>
<span class="t" style="left:503.00px;top:110.00px;font:bold 7px 'Liberation Sans', sans-serif;color:#fff;transform:scaleX(0.9534);">4000 Ft</span>
<span class="t" style="left:503.00px;top:151.00px;font:bold 7px 'Liberation Sans', sans-serif;color:#fff;transform:scaleX(0.9534);">2000 Ft</span>
<span class="t" style="left:503.00px;top:228.00px;font:bold 7px 'Liberation Sans', sans-serif;color:#fff;transform:scaleX(0.8833);">150 Kts</span>
<span class="t" style="left:503.00px;top:258.00px;font:bold 7px 'Liberation Sans', sans-serif;color:#fff;transform:scaleX(0.8833);">100 Kts</span>
<span class="t" style="left:503.00px;top:289.00px;font:bold 7px 'Liberation Sans', sans-serif;color:#fff;transform:scaleX(0.9041);">50 Kts</span>
<span class="t" style="left:503.00px;top:497.00px;font:bold 7px 'Liberation Sans', sans-serif;color:#fff;transform:scaleX(0.9521);">37&#x27;</span>
</div>
<svg width="791" height="668" viewBox="0 0 791 668">
<polyline shape-rendering="crispEdges" fill="none" stroke="#ffff00" stroke-width="1.7" stroke-linejoin="round" points="541,196.5 545,195 549,192.5 553,189.5 556,188 559,188.5 563,190 567,190.5 570,191.5 574,190.5 578,190 581,188 585,184.5 589,183.5 593,183.5 598,181 603,179 608,178.5 612,178.5 614.5,177.5 618,179.5 623,180.5 628,181.5 633,182 637,183 641,183 645,182 649,182 653,184 657,182.5 660,180.5 662,185 664,186 676,186 681,188.5 687,190.5 692,193 697,196.5"/>
<rect x="541" y="197" width="66" height="1" fill="#ff0000" shape-rendering="crispEdges"/>
<rect x="557" y="196" width="21" height="1" fill="#ff0000" shape-rendering="crispEdges"/>
<rect x="649" y="197" width="6" height="1" fill="#ff0000" shape-rendering="crispEdges"/>
<rect x="665" y="197" width="36" height="1" fill="#ff0000" shape-rendering="crispEdges"/>
<rect x="690" y="196" width="11" height="1" fill="#ff0000" shape-rendering="crispEdges"/>
<rect x="673" y="196" width="2" height="1" fill="#ff0000" shape-rendering="crispEdges"/>
<rect x="677" y="196" width="2" height="1" fill="#ff0000" shape-rendering="crispEdges"/>
<rect x="541" y="274" width="2" height="2" fill="#ffff00" shape-rendering="crispEdges"/>
<rect x="543" y="271" width="2" height="2" fill="#ffff00" shape-rendering="crispEdges"/>
<rect x="545" y="266" width="2" height="2" fill="#ffff00" shape-rendering="crispEdges"/>
<rect x="547" y="264" width="2" height="2" fill="#ffff00" shape-rendering="crispEdges"/>
<rect x="549" y="262" width="2" height="2" fill="#ffff00" shape-rendering="crispEdges"/>
<rect x="551" y="264" width="2" height="2" fill="#ffff00" shape-rendering="crispEdges"/>
<rect x="553" y="265" width="2" height="2" fill="#ffff00" shape-rendering="crispEdges"/>
<rect x="555" y="268" width="2" height="2" fill="#ffff00" shape-rendering="crispEdges"/>
<rect x="557" y="268" width="2" height="2" fill="#ffff00" shape-rendering="crispEdges"/>
<rect x="559" y="267" width="2" height="2" fill="#ffff00" shape-rendering="crispEdges"/>
<rect x="561" y="266" width="2" height="2" fill="#ffff00" shape-rendering="crispEdges"/>
<rect x="563" y="265" width="2" height="2" fill="#ffff00" shape-rendering="crispEdges"/>
<rect x="565" y="265" width="2" height="2" fill="#ffff00" shape-rendering="crispEdges"/>
<rect x="567" y="265" width="2" height="2" fill="#ffff00" shape-rendering="crispEdges"/>
<rect x="569" y="265" width="2" height="2" fill="#ffff00" shape-rendering="crispEdges"/>
<rect x="571" y="266" width="2" height="2" fill="#ffff00" shape-rendering="crispEdges"/>
<rect x="573" y="269" width="2" height="2" fill="#ffff00" shape-rendering="crispEdges"/>
<rect x="575" y="268" width="2" height="2" fill="#ffff00" shape-rendering="crispEdges"/>
<rect x="577" y="270" width="2" height="2" fill="#ffff00" shape-rendering="crispEdges"/>
<rect x="579" y="274" width="2" height="2" fill="#ffff00" shape-rendering="crispEdges"/>
<rect x="581" y="276" width="2" height="2" fill="#ffff00" shape-rendering="crispEdges"/>
<rect x="583" y="279" width="2" height="2" fill="#ffff00" shape-rendering="crispEdges"/>
<rect x="585" y="279" width="2" height="2" fill="#ffff00" shape-rendering="crispEdges"/>
<rect x="587" y="276" width="2" height="2" fill="#ffff00" shape-rendering="crispEdges"/>
<rect x="589" y="272" width="2" height="2" fill="#ffff00" shape-rendering="crispEdges"/>
<rect x="591" y="270" width="2" height="2" fill="#ffff00" shape-rendering="crispEdges"/>
<rect x="593" y="271" width="2" height="2" fill="#ffff00" shape-rendering="crispEdges"/>
<rect x="595" y="274" width="2" height="2" fill="#ffff00" shape-rendering="crispEdges"/>
<rect x="597" y="274" width="2" height="2" fill="#ffff00" shape-rendering="crispEdges"/>
<rect x="599" y="274" width="2" height="2" fill="#ffff00" shape-rendering="crispEdges"/>
<rect x="601" y="272" width="2" height="2" fill="#ffff00" shape-rendering="crispEdges"/>
<rect x="603" y="271" width="2" height="2" fill="#ffff00" shape-rendering="crispEdges"/>
<rect x="605" y="269" width="2" height="2" fill="#ffff00" shape-rendering="crispEdges"/>
<rect x="607" y="267" width="2" height="2" fill="#ffff00" shape-rendering="crispEdges"/>
<rect x="609" y="267" width="2" height="2" fill="#ffff00" shape-rendering="crispEdges"/>
<rect x="611" y="268" width="2" height="2" fill="#ffff00" shape-rendering="crispEdges"/>
<rect x="613" y="266" width="2" height="2" fill="#ffff00" shape-rendering="crispEdges"/>
<rect x="615" y="264" width="2" height="2" fill="#ffff00" shape-rendering="crispEdges"/>
<rect x="617" y="262" width="2" height="2" fill="#ffff00" shape-rendering="crispEdges"/>
<rect x="619" y="260" width="2" height="2" fill="#ffff00" shape-rendering="crispEdges"/>
<rect x="621" y="259" width="2" height="2" fill="#ffff00" shape-rendering="crispEdges"/>
<rect x="623" y="258" width="2" height="2" fill="#ffff00" shape-rendering="crispEdges"/>
<rect x="625" y="258" width="2" height="2" fill="#ffff00" shape-rendering="crispEdges"/>
<rect x="627" y="258" width="2" height="2" fill="#ffff00" shape-rendering="crispEdges"/>
<rect x="629" y="258" width="2" height="2" fill="#ffff00" shape-rendering="crispEdges"/>
<rect x="631" y="258" width="2" height="2" fill="#ffff00" shape-rendering="crispEdges"/>
<rect x="633" y="258" width="2" height="2" fill="#ffff00" shape-rendering="crispEdges"/>
<rect x="635" y="259" width="2" height="2" fill="#ffff00" shape-rendering="crispEdges"/>
<rect x="637" y="259" width="2" height="2" fill="#ffff00" shape-rendering="crispEdges"/>
<rect x="639" y="260" width="2" height="2" fill="#ffff00" shape-rendering="crispEdges"/>
<rect x="641" y="260" width="2" height="2" fill="#ffff00" shape-rendering="crispEdges"/>
<rect x="643" y="260" width="2" height="2" fill="#ffff00" shape-rendering="crispEdges"/>
<rect x="645" y="261" width="2" height="2" fill="#ffff00" shape-rendering="crispEdges"/>
<rect x="647" y="260" width="2" height="2" fill="#ffff00" shape-rendering="crispEdges"/>
<rect x="649" y="257" width="2" height="2" fill="#ffff00" shape-rendering="crispEdges"/>
<rect x="651" y="258" width="2" height="2" fill="#ffff00" shape-rendering="crispEdges"/>
<rect x="653" y="260" width="2" height="2" fill="#ffff00" shape-rendering="crispEdges"/>
<rect x="655" y="262" width="2" height="2" fill="#ffff00" shape-rendering="crispEdges"/>
<rect x="657" y="264" width="2" height="2" fill="#ffff00" shape-rendering="crispEdges"/>
<rect x="659" y="265" width="2" height="2" fill="#ffff00" shape-rendering="crispEdges"/>
<rect x="661" y="258" width="2" height="2" fill="#ffff00" shape-rendering="crispEdges"/>
<rect x="663" y="254" width="2" height="2" fill="#ffff00" shape-rendering="crispEdges"/>
<rect x="665" y="254" width="2" height="2" fill="#ffff00" shape-rendering="crispEdges"/>
<rect x="667" y="255" width="2" height="2" fill="#ffff00" shape-rendering="crispEdges"/>
<rect x="669" y="258" width="2" height="2" fill="#ffff00" shape-rendering="crispEdges"/>
<rect x="671" y="262" width="2" height="2" fill="#ffff00" shape-rendering="crispEdges"/>
<rect x="673" y="264" width="2" height="2" fill="#ffff00" shape-rendering="crispEdges"/>
<rect x="675" y="266" width="2" height="2" fill="#ffff00" shape-rendering="crispEdges"/>
<rect x="677" y="269" width="2" height="2" fill="#ffff00" shape-rendering="crispEdges"/>
<rect x="679" y="271" width="2" height="2" fill="#ffff00" shape-rendering="crispEdges"/>
<rect x="681" y="275" width="2" height="2" fill="#ffff00" shape-rendering="crispEdges"/>
<rect x="683" y="279" width="2" height="2" fill="#ffff00" shape-rendering="crispEdges"/>
<rect x="685" y="282" width="2" height="2" fill="#ffff00" shape-rendering="crispEdges"/>
<rect x="687" y="285" width="2" height="2" fill="#ffff00" shape-rendering="crispEdges"/>
<rect x="689" y="287" width="2" height="2" fill="#ffff00" shape-rendering="crispEdges"/>
<rect x="691" y="286" width="2" height="2" fill="#ffff00" shape-rendering="crispEdges"/>
<rect x="693" y="286" width="2" height="2" fill="#ffff00" shape-rendering="crispEdges"/>
<rect x="695" y="285" width="2" height="2" fill="#ffff00" shape-rendering="crispEdges"/>
<rect x="697" y="285" width="2" height="2" fill="#ffff00" shape-rendering="crispEdges"/>
<rect x="699" y="289" width="2" height="2" fill="#ffff00" shape-rendering="crispEdges"/>
<path shape-rendering="crispEdges" fill="none" stroke="#ffff00" stroke-width="1.7" stroke-linejoin="round" d="M606,453.6 L628,453.6 L630,452.8 L638,452.8 Q640.5,453 640.5,455.5 L640.5,459 Q640.5,461.3 638,461.3 L607,461.3 Q603,460.5 603,457.5 Q603,454 606,453.6 Z"/>
<g shape-rendering="crispEdges">
<rect x="398" y="42" width="10" height="9" fill="#fff"/>
<rect x="398" y="42" width="6" height="1" fill="#000"/>
<rect x="398" y="42" width="1" height="9" fill="#000"/>
<rect x="407" y="46" width="1" height="5" fill="#000"/>
<rect x="404" y="43" width="1" height="1" fill="#000"/>
<rect x="405" y="44" width="1" height="1" fill="#000"/>
<rect x="406" y="45" width="1" height="1" fill="#000"/>
<rect x="404" y="42" width="4" height="1" fill="#f0f0f0"/>
<rect x="405" y="43" width="3" height="1" fill="#f0f0f0"/>
<rect x="406" y="44" width="2" height="1" fill="#f0f0f0"/>
<rect x="407" y="45" width="1" height="1" fill="#f0f0f0"/>
<rect x="403" y="43" width="1" height="3" fill="#000"/>
<rect x="403" y="45" width="4" height="1" fill="#000"/>
<rect x="400" y="44" width="2" height="1" fill="#000"/>
<rect x="400" y="46" width="3" height="1" fill="#000"/>
<rect x="400" y="48" width="4" height="1" fill="#000"/>
<rect x="405" y="48" width="1" height="1" fill="#000"/>
<rect x="395" y="50" width="16" height="8" fill="#000"/>
<rect x="396" y="51" width="14" height="3" fill="#fff"/>
<rect x="396" y="52" width="1" height="1" fill="#b0b0b0"/>
<rect x="398" y="52" width="1" height="1" fill="#b0b0b0"/>
<rect x="400" y="52" width="1" height="1" fill="#b0b0b0"/>
<rect x="402" y="52" width="1" height="1" fill="#b0b0b0"/>
<rect x="404" y="52" width="1" height="1" fill="#b0b0b0"/>
<rect x="406" y="52" width="1" height="1" fill="#b0b0b0"/>
<rect x="408" y="52" width="1" height="1" fill="#b0b0b0"/>
<rect x="408" y="52" width="1" height="1" fill="#ff0000"/>
<rect x="396" y="55" width="14" height="2" fill="#c0c0c0"/>
<rect x="395" y="57" width="1" height="1" fill="#f0f0f0"/>
<rect x="410" y="57" width="1" height="1" fill="#f0f0f0"/>
</g>
<g shape-rendering="crispEdges">
<rect x="468" y="186" width="3" height="1" fill="#000"/>
<rect x="477" y="186" width="3" height="1" fill="#ff0000"/>
<rect x="467" y="187" width="5" height="1" fill="#000"/>
<rect x="478" y="187" width="1" height="1" fill="#ffff00"/>
<rect x="479" y="187" width="1" height="1" fill="#000"/>
<rect x="466" y="188" width="5" height="1" fill="#000"/>
<rect x="471" y="188" width="2" height="1" fill="#00dce6"/>
<rect x="477" y="188" width="2" height="1" fill="#ffff00"/>
<rect x="479" y="188" width="1" height="1" fill="#000"/>
<rect x="466" y="189" width="4" height="1" fill="#000"/>
<rect x="470" y="189" width="3" height="1" fill="#00dce6"/>
<rect x="473" y="189" width="1" height="1" fill="#000"/>
<rect x="478" y="189" width="1" height="1" fill="#c8c800"/>
<rect x="479" y="189" width="1" height="1" fill="#000"/>
<rect x="467" y="190" width="2" height="1" fill="#000"/>
<rect x="469" y="190" width="3" height="1" fill="#00dce6"/>
<rect x="472" y="190" width="1" height="1" fill="#ffffff"/>
<rect x="473" y="190" width="1" height="1" fill="#ffff00"/>
<rect x="474" y="190" width="1" height="1" fill="#ffffff"/>
<rect x="475" y="190" width="1" height="1" fill="#ffff00"/>
<rect x="476" y="190" width="1" height="1" fill="#ffffff"/>
<rect x="477" y="190" width="1" height="1" fill="#000"/>
<rect x="478" y="190" width="1" height="1" fill="#c8c800"/>
<rect x="479" y="190" width="1" height="1" fill="#000"/>
<rect x="468" y="191" width="3" height="1" fill="#00dce6"/>
<rect x="471" y="191" width="1" height="1" fill="#ffff00"/>
<rect x="472" y="191" width="1" height="1" fill="#ffffff"/>
<rect x="473" y="191" width="1" height="1" fill="#ffff00"/>
<rect x="474" y="191" width="1" height="1" fill="#ffffff"/>
<rect x="475" y="191" width="1" height="1" fill="#000"/>
<rect x="476" y="191" width="1" height="1" fill="#ffffff"/>
<rect x="477" y="191" width="1" height="1" fill="#ffff00"/>
<rect x="478" y="191" width="1" height="1" fill="#c8c800"/>
<rect x="479" y="191" width="1" height="1" fill="#000"/>
<rect x="468" y="192" width="2" height="1" fill="#00dce6"/>
<rect x="470" y="192" width="1" height="1" fill="#000"/>
<rect x="471" y="192" width="1" height="1" fill="#ffffff"/>
<rect x="472" y="192" width="1" height="1" fill="#ffff00"/>
<rect x="473" y="192" width="1" height="1" fill="#ffffff"/>
<rect x="474" y="192" width="1" height="1" fill="#ffff00"/>
<rect x="475" y="192" width="1" height="1" fill="#ffffff"/>
<rect x="476" y="192" width="1" height="1" fill="#ffff00"/>
<rect x="477" y="192" width="1" height="1" fill="#ffffff"/>
<rect x="478" y="192" width="1" height="1" fill="#ffff00"/>
<rect x="479" y="192" width="1" height="1" fill="#000"/>
<rect x="469" y="193" width="2" height="1" fill="#000"/>
<rect x="471" y="193" width="1" height="1" fill="#ffff00"/>
<rect x="472" y="193" width="1" height="1" fill="#ffffff"/>
<rect x="473" y="193" width="1" height="1" fill="#ffff00"/>
<rect x="474" y="193" width="1" height="1" fill="#ffffff"/>
<rect x="475" y="193" width="1" height="1" fill="#ffff00"/>
<rect x="476" y="193" width="1" height="1" fill="#ffffff"/>
<rect x="477" y="193" width="1" height="1" fill="#000"/>
<rect x="478" y="193" width="1" height="1" fill="#ffffff"/>
<rect x="479" y="193" width="1" height="1" fill="#000"/>
<rect x="470" y="194" width="1" height="1" fill="#000"/>
<rect x="471" y="194" width="1" height="1" fill="#ffffff"/>
<rect x="472" y="194" width="1" height="1" fill="#ffff00"/>
<rect x="473" y="194" width="1" height="1" fill="#ffffff"/>
<rect x="474" y="194" width="1" height="1" fill="#ffff00"/>
<rect x="475" y="194" width="1" height="1" fill="#000"/>
<rect x="476" y="194" width="1" height="1" fill="#ffffff"/>
<rect x="477" y="194" width="1" height="1" fill="#ffff00"/>
<rect x="478" y="194" width="1" height="1" fill="#ffffff"/>
<rect x="479" y="194" width="1" height="1" fill="#000"/>
<rect x="471" y="195" width="1" height="1" fill="#000"/>
<rect x="472" y="195" width="1" height="1" fill="#ffff00"/>
<rect x="473" y="195" width="1" height="1" fill="#ffffff"/>
<rect x="474" y="195" width="1" height="1" fill="#ffff00"/>
<rect x="475" y="195" width="1" height="1" fill="#ffffff"/>
<rect x="476" y="195" width="1" height="1" fill="#000"/>
<rect x="477" y="195" width="1" height="1" fill="#ffffff"/>
<rect x="478" y="195" width="1" height="1" fill="#ffff00"/>
<rect x="479" y="195" width="1" height="1" fill="#ffffff"/>
<rect x="480" y="195" width="1" height="1" fill="#000"/>
<rect x="472" y="196" width="1" height="1" fill="#000"/>
<rect x="473" y="196" width="1" height="1" fill="#ffff00"/>
<rect x="474" y="196" width="1" height="1" fill="#000"/>
<rect x="475" y="196" width="1" height="1" fill="#ffffff"/>
<rect x="476" y="196" width="1" height="1" fill="#ffff00"/>
<rect x="477" y="196" width="1" height="1" fill="#ffffff"/>
<rect x="478" y="196" width="1" height="1" fill="#ffff00"/>
<rect x="479" y="196" width="1" height="1" fill="#ffffff"/>
<rect x="480" y="196" width="1" height="1" fill="#000"/>
<rect x="473" y="197" width="1" height="1" fill="#000"/>
<rect x="474" y="197" width="1" height="1" fill="#ffffff"/>
<rect x="475" y="197" width="2" height="1" fill="#ffff00"/>
<rect x="477" y="197" width="2" height="1" fill="#000"/>
<rect x="479" y="197" width="1" height="1" fill="#ffff00"/>
<rect x="480" y="197" width="1" height="1" fill="#000"/>
<rect x="474" y="198" width="3" height="1" fill="#000"/>
<rect x="478" y="198" width="1" height="1" fill="#c8c800"/>
<rect x="479" y="198" width="1" height="1" fill="#000"/>
<rect x="478" y="199" width="1" height="1" fill="#000"/>
<rect x="467" y="200" width="11" height="1" fill="#808080"/>
</g>
<g shape-rendering="crispEdges">
<rect x="468" y="211" width="3" height="1" fill="#000"/>
<rect x="477" y="211" width="3" height="1" fill="#ff0000"/>
<rect x="467" y="212" width="5" height="1" fill="#000"/>
<rect x="478" y="212" width="1" height="1" fill="#ffff00"/>
<rect x="479" y="212" width="1" height="1" fill="#000"/>
<rect x="466" y="213" width="5" height="1" fill="#000"/>
<rect x="471" y="213" width="2" height="1" fill="#00dce6"/>
<rect x="477" y="213" width="2" height="1" fill="#ffff00"/>
<rect x="479" y="213" width="1" height="1" fill="#000"/>
<rect x="466" y="214" width="4" height="1" fill="#000"/>
<rect x="470" y="214" width="3" height="1" fill="#00dce6"/>
<rect x="473" y="214" width="1" height="1" fill="#000"/>
<rect x="478" y="214" width="1" height="1" fill="#c8c800"/>
<rect x="479" y="214" width="1" height="1" fill="#000"/>
<rect x="467" y="215" width="2" height="1" fill="#000"/>
<rect x="469" y="215" width="3" height="1" fill="#00dce6"/>
<rect x="472" y="215" width="1" height="1" fill="#ffffff"/>
<rect x="473" y="215" width="1" height="1" fill="#ffff00"/>
<rect x="474" y="215" width="1" height="1" fill="#ffffff"/>
<rect x="475" y="215" width="1" height="1" fill="#ffff00"/>
<rect x="476" y="215" width="1" height="1" fill="#ffffff"/>
<rect x="477" y="215" width="1" height="1" fill="#000"/>
<rect x="478" y="215" width="1" height="1" fill="#c8c800"/>
<rect x="479" y="215" width="1" height="1" fill="#000"/>
<rect x="468" y="216" width="3" height="1" fill="#00dce6"/>
<rect x="471" y="216" width="1" height="1" fill="#ffff00"/>
<rect x="472" y="216" width="1" height="1" fill="#ffffff"/>
<rect x="473" y="216" width="1" height="1" fill="#ffff00"/>
<rect x="474" y="216" width="1" height="1" fill="#ffffff"/>
<rect x="475" y="216" width="1" height="1" fill="#000"/>
<rect x="476" y="216" width="1" height="1" fill="#ffffff"/>
<rect x="477" y="216" width="1" height="1" fill="#ffff00"/>
<rect x="478" y="216" width="1" height="1" fill="#c8c800"/>
<rect x="479" y="216" width="1" height="1" fill="#000"/>
<rect x="468" y="217" width="2" height="1" fill="#00dce6"/>
<rect x="470" y="217" width="1" height="1" fill="#000"/>
<rect x="471" y="217" width="1" height="1" fill="#ffffff"/>
<rect x="472" y="217" width="1" height="1" fill="#ffff00"/>
<rect x="473" y="217" width="1" height="1" fill="#ffffff"/>
<rect x="474" y="217" width="1" height="1" fill="#ffff00"/>
<rect x="475" y="217" width="1" height="1" fill="#ffffff"/>
<rect x="476" y="217" width="1" height="1" fill="#ffff00"/>
<rect x="477" y="217" width="1" height="1" fill="#ffffff"/>
<rect x="478" y="217" width="1" height="1" fill="#ffff00"/>
<rect x="479" y="217" width="1" height="1" fill="#000"/>
<rect x="469" y="218" width="2" height="1" fill="#000"/>
<rect x="471" y="218" width="1" height="1" fill="#ffff00"/>
<rect x="472" y="218" width="1" height="1" fill="#ffffff"/>
<rect x="473" y="218" width="1" height="1" fill="#ffff00"/>
<rect x="474" y="218" width="1" height="1" fill="#ffffff"/>
<rect x="475" y="218" width="1" height="1" fill="#ffff00"/>
<rect x="476" y="218" width="1" height="1" fill="#ffffff"/>
<rect x="477" y="218" width="1" height="1" fill="#000"/>
<rect x="478" y="218" width="1" height="1" fill="#ffffff"/>
<rect x="479" y="218" width="1" height="1" fill="#000"/>
<rect x="470" y="219" width="1" height="1" fill="#000"/>
<rect x="471" y="219" width="1" height="1" fill="#ffffff"/>
<rect x="472" y="219" width="1" height="1" fill="#ffff00"/>
<rect x="473" y="219" width="1" height="1" fill="#ffffff"/>
<rect x="474" y="219" width="1" height="1" fill="#ffff00"/>
<rect x="475" y="219" width="1" height="1" fill="#000"/>
<rect x="476" y="219" width="1" height="1" fill="#ffffff"/>
<rect x="477" y="219" width="1" height="1" fill="#ffff00"/>
<rect x="478" y="219" width="1" height="1" fill="#ffffff"/>
<rect x="479" y="219" width="1" height="1" fill="#000"/>
<rect x="471" y="220" width="1" height="1" fill="#000"/>
<rect x="472" y="220" width="1" height="1" fill="#ffff00"/>
<rect x="473" y="220" width="1" height="1" fill="#ffffff"/>
<rect x="474" y="220" width="1" height="1" fill="#ffff00"/>
<rect x="475" y="220" width="1" height="1" fill="#ffffff"/>
<rect x="476" y="220" width="1" height="1" fill="#000"/>
<rect x="477" y="220" width="1" height="1" fill="#ffffff"/>
<rect x="478" y="220" width="1" height="1" fill="#ffff00"/>
<rect x="479" y="220" width="1" height="1" fill="#ffffff"/>
<rect x="480" y="220" width="1" height="1" fill="#000"/>
<rect x="472" y="221" width="1" height="1" fill="#000"/>
<rect x="473" y="221" width="1" height="1" fill="#ffff00"/>
<rect x="474" y="221" width="1" height="1" fill="#000"/>
<rect x="475" y="221" width="1" height="1" fill="#ffffff"/>
<rect x="476" y="221" width="1" height="1" fill="#ffff00"/>
<rect x="477" y="221" width="1" height="1" fill="#ffffff"/>
<rect x="478" y="221" width="1" height="1" fill="#ffff00"/>
<rect x="479" y="221" width="1" height="1" fill="#ffffff"/>
<rect x="480" y="221" width="1" height="1" fill="#000"/>
<rect x="473" y="222" width="1" height="1" fill="#000"/>
<rect x="474" y="222" width="1" height="1" fill="#ffffff"/>
<rect x="475" y="222" width="2" height="1" fill="#ffff00"/>
<rect x="477" y="222" width="2" height="1" fill="#000"/>
<rect x="479" y="222" width="1" height="1" fill="#ffff00"/>
<rect x="480" y="222" width="1" height="1" fill="#000"/>
<rect x="474" y="223" width="3" height="1" fill="#000"/>
<rect x="478" y="223" width="1" height="1" fill="#c8c800"/>
<rect x="479" y="223" width="1" height="1" fill="#000"/>
<rect x="478" y="224" width="1" height="1" fill="#000"/>
<rect x="467" y="225" width="11" height="1" fill="#808080"/>
</g>
<g shape-rendering="crispEdges">
<rect x="458" y="211" width="1" height="1" fill="#ffff00"/>
<rect x="456" y="212" width="3" height="1" fill="#ffff00"/>
<rect x="455" y="213" width="4" height="1" fill="#ffff00"/>
<rect x="445" y="214" width="1" height="1" fill="#000"/>
<rect x="454" y="214" width="4" height="1" fill="#ffff00"/>
<rect x="458" y="214" width="1" height="1" fill="#c8c800"/>
<rect x="453" y="215" width="4" height="1" fill="#ffff00"/>
<rect x="457" y="215" width="1" height="1" fill="#c8c800"/>
<rect x="446" y="216" width="1" height="1" fill="#000"/>
<rect x="452" y="216" width="2" height="1" fill="#ffff00"/>
<rect x="454" y="216" width="1" height="1" fill="#c8c800"/>
<rect x="455" y="216" width="1" height="1" fill="#ffff00"/>
<rect x="456" y="216" width="1" height="1" fill="#c8c800"/>
<rect x="445" y="217" width="1" height="1" fill="#000"/>
<rect x="451" y="217" width="2" height="1" fill="#ffff00"/>
<rect x="453" y="217" width="1" height="1" fill="#c8c800"/>
<rect x="454" y="217" width="1" height="1" fill="#ffff00"/>
<rect x="455" y="217" width="1" height="1" fill="#c8c800"/>
<rect x="444" y="218" width="1" height="1" fill="#000"/>
<rect x="447" y="218" width="1" height="1" fill="#000"/>
<rect x="450" y="218" width="3" height="1" fill="#ff0000"/>
<rect x="453" y="218" width="1" height="1" fill="#ffff00"/>
<rect x="454" y="218" width="1" height="1" fill="#c8c800"/>
<rect x="443" y="219" width="2" height="1" fill="#000"/>
<rect x="449" y="219" width="5" height="1" fill="#ff0000"/>
<rect x="443" y="220" width="2" height="1" fill="#000"/>
<rect x="447" y="220" width="1" height="1" fill="#000"/>
<rect x="449" y="220" width="4" height="1" fill="#ff0000"/>
<rect x="444" y="221" width="3" height="1" fill="#000"/>
<rect x="449" y="221" width="1" height="1" fill="#000"/>
<rect x="450" y="221" width="2" height="1" fill="#ff0000"/>
<rect x="445" y="222" width="3" height="1" fill="#000"/>
<rect x="449" y="222" width="1" height="1" fill="#000"/>
<rect x="444" y="223" width="2" height="1" fill="#000"/>
<rect x="447" y="223" width="2" height="1" fill="#000"/>
<rect x="443" y="224" width="2" height="1" fill="#000"/>
<rect x="447" y="224" width="2" height="1" fill="#000"/>
<rect x="450" y="224" width="1" height="1" fill="#000"/>
<rect x="442" y="225" width="2" height="1" fill="#000"/>
<rect x="447" y="225" width="2" height="1" fill="#000"/>
<rect x="453" y="225" width="1" height="1" fill="#000"/>
<rect x="442" y="226" width="2" height="1" fill="#000"/>
<rect x="446" y="226" width="3" height="1" fill="#000"/>
<rect x="450" y="226" width="1" height="1" fill="#000"/>
<rect x="443" y="227" width="4" height="1" fill="#000"/>
<rect x="448" y="227" width="2" height="1" fill="#000"/>
</g>
<g fill="none" stroke-linecap="round"><path d="M760.2,7 L766.8,13 M766.8,7 L760.2,13" stroke="#474c66" stroke-width="4"/><path d="M760.2,7 L766.8,13 M766.8,7 L760.2,13" stroke="#fcfcfc" stroke-width="1.9"/></g>
</svg>
</body>
</html>
